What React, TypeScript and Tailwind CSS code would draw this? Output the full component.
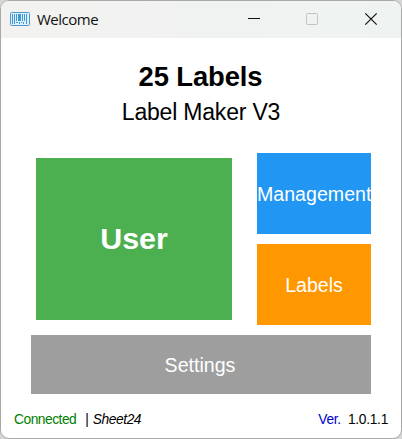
import React from "react";

function BarcodeIcon() {
  return (
    <svg width="20" height="14" viewBox="0 0 20 14" className="mb-px ml-[9px] shrink-0">
      <rect x="0.5" y="0.5" width="19" height="13" rx="1" fill="#dff0fb" stroke="#469bd5" />
      <g fill="#3f98d8">
        <rect x="2" y="2" width="1" height="10" />
        <rect x="4" y="2" width="1" height="10" />
        <rect x="6" y="2" width="1" height="7" />
        <rect x="8" y="2" width="3" height="7" />
        <rect x="12" y="2" width="1" height="7" />
        <rect x="14" y="2" width="1" height="7" />
        <rect x="16" y="2" width="1" height="10" />
        <rect x="6" y="10" width="2" height="1" />
        <rect x="9" y="10" width="1" height="2" />
        <rect x="11" y="10" width="1" height="1" />
        <rect x="13" y="10" width="1" height="2" />
      </g>
    </svg>
  );
}

function TitleBar() {
  return (
    <header className="flex h-[37px] items-center bg-linear-to-r from-[#f3f2f1] via-[#f0f2f1] to-[#eef3f2]">
      <BarcodeIcon />
      <span className="mb-px ml-[7px] font-['Open_Sans',sans-serif] text-[15px] leading-5 tracking-[-0.5px] text-[#111]">
        Welcome
      </span>
      <svg width="130" height="14" viewBox="0 0 130 14" className="mr-[23px] mb-px ml-auto" fill="none">
        <path d="M0 6.5h12" stroke="#111" />
        <rect x="58.5" y="1.5" width="11" height="11" rx="1" stroke="#bfc3c2" />
        <path d="M117.3 1.3l11.4 11.4M128.7 1.3L117.3 12.7" stroke="#111" strokeWidth="1.2" />
      </svg>
    </header>
  );
}

export default function App() {
  return (
    <div className="h-[439px] w-[402px] overflow-hidden bg-[#d5d5d5] font-['Liberation_Sans',Arial,sans-serif]">
      <div className="flex h-[439px] w-[402px] flex-col overflow-hidden rounded-[9px] border border-[#a9a9a9] bg-white">
        <TitleBar />
        <h1 className="mt-[23px] pr-px text-center text-[27.4px] leading-8 font-bold tracking-[-0.1px] text-black">
          25 Labels
        </h1>
        <p className="mt-[3px] text-center text-[23px] leading-8 tracking-[-0.2px] text-black">Label Maker V3</p>
        <main className="mt-[25px] ml-[30px] flex w-[340px] flex-col gap-2.5">
          <div className="flex items-center justify-between pl-[5px]">
            <button className="h-[162px] w-[196px] bg-[#4caf50] text-[30.4px] font-bold text-white">User</button>
            <div className="flex w-[114px] flex-col gap-2.5 text-[19.6px] text-white">
              <button className="h-[81px] bg-[#2196f3] pt-0.5 whitespace-nowrap">Management</button>
              <button className="h-[81px] bg-[#ff9800] pt-0.5">Labels</button>
            </div>
          </div>
          <button className="h-[59px] bg-[#9e9e9e] pt-0.5 pr-0.5 text-[19.6px] text-white">Settings</button>
        </main>
        <footer className="mt-[18px] flex items-center px-[13px] text-[13.8px] leading-4 text-black">
          <span className="tracking-[-0.5px] text-[#008000]">Connected</span>
          <span className="ml-[9px]">|</span>
          <span className="ml-[4px] tracking-[-0.45px] italic">Sheet24</span>
          <span className="ml-auto tracking-[-0.3px] text-[#0000cd]">Ver.</span>
          <span className="ml-[7px] tracking-[-0.3px]">1.0.1.1</span>
        </footer>
      </div>
    </div>
  );
}
